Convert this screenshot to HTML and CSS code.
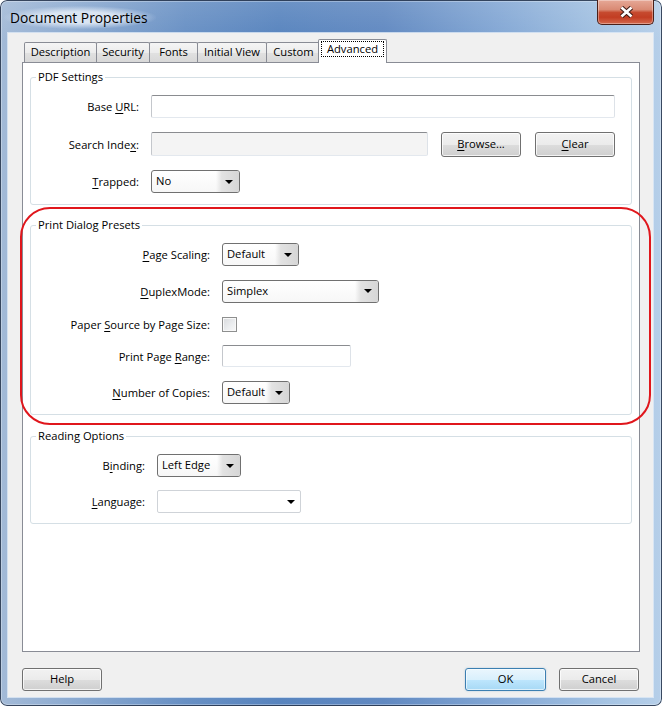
FILE: index.html
```html
<!DOCTYPE html>
<html>
<head>
<meta charset="utf-8">
<title>Document Properties</title>
<link rel="stylesheet" href="styles.css">
</head>
<body>
<div class="window">
  <div class="titlebar">
    <div class="title">Document Properties</div>
    <div class="close">
      <svg class="close-x" width="15" height="12" viewBox="0 0 15 12">
        <path d="M2.5 1.5 L12.5 10.5 M12.5 1.5 L2.5 10.5" stroke="#3a1812" stroke-width="4.6" fill="none"/>
        <path d="M2.5 1.5 L12.5 10.5 M12.5 1.5 L2.5 10.5" stroke="#ffffff" stroke-width="2.6" fill="none"/>
      </svg>
    </div>
  </div>
  <div class="client">
    <div class="tabs">
      <div class="tab t-desc">Description</div>
      <div class="tab t-sec">Security</div>
      <div class="tab t-fonts">Fonts</div>
      <div class="tab t-init">Initial View</div>
      <div class="tab t-custom">Custom</div>
      <div class="tab tab-active t-adv"><span class="focus">Advanced</span></div>
    </div>
    <div class="panel">
      <div class="group g-pdf">
        <div class="group-label">PDF Settings</div>
        <div class="row">
          <div class="lbl lbl-pdf">Base <u>U</u>RL:</div>
          <div class="textbox tb-url"></div>
        </div>
        <div class="row row-tall">
          <div class="lbl lbl-pdf">Search Inde<u>x</u>:</div>
          <div class="textbox tb-search"></div>
          <div class="btn btn-browse"><u>B</u>rowse...</div>
          <div class="btn btn-clear"><u>C</u>lear</div>
        </div>
        <div class="row">
          <div class="lbl lbl-pdf"><u>T</u>rapped:</div>
          <div class="combo cb-trapped"><span class="combo-text">No</span><span class="combo-arrow"><span class="tri"></span></span></div>
        </div>
      </div>

      <div class="group g-print">
        <div class="group-label">Print Dialog Presets</div>
        <div class="row">
          <div class="lbl lbl-print"><u>P</u>age Scaling:</div>
          <div class="combo cb-scaling"><span class="combo-text">Default</span><span class="combo-arrow"><span class="tri"></span></span></div>
        </div>
        <div class="row">
          <div class="lbl lbl-print"><u>D</u>uplexMode:</div>
          <div class="combo cb-duplex"><span class="combo-text">Simplex</span><span class="combo-arrow"><span class="tri"></span></span></div>
        </div>
        <div class="row row-check">
          <div class="lbl lbl-print">Paper <u>S</u>ource by Page Size:</div>
          <div class="checkbox"></div>
        </div>
        <div class="row row-range">
          <div class="lbl lbl-print">Print Page <u>R</u>ange:</div>
          <div class="textbox tb-range"></div>
        </div>
        <div class="row">
          <div class="lbl lbl-print"><u>N</u>umber of Copies:</div>
          <div class="combo cb-copies"><span class="combo-text">Default</span><span class="combo-arrow"><span class="tri"></span></span></div>
        </div>
      </div>

      <div class="group g-read">
        <div class="group-label">Reading Options</div>
        <div class="row">
          <div class="lbl lbl-read">B<u>i</u>nding:</div>
          <div class="combo cb-binding"><span class="combo-text">Left Edge</span><span class="combo-arrow"><span class="tri"></span></span></div>
        </div>
        <div class="row">
          <div class="lbl lbl-read"><u>L</u>anguage:</div>
          <div class="combo-flat cb-lang"><span class="combo-text"></span><span class="flat-arrow"><span class="tri"></span></span></div>
        </div>
      </div>
    </div>
    <div class="footer">
      <div class="btn btn-foot">Help</div>
      <div class="spacer"></div>
      <div class="btn btn-foot btn-default">OK</div>
      <div class="btn btn-foot btn-cancel">Cancel</div>
    </div>
  </div>
  <div class="highlight"></div>
</div>
</body>
</html>
```

FILE: styles.css
```css
html, body {
  margin: 0;
  padding: 0;
  background: #ffffff;
}

.window {
  position: relative;
  width: 662px;
  height: 706px;
  box-sizing: border-box;
  padding: 0 9px 9px 8px;
  display: flex;
  flex-direction: column;
  border-radius: 7px;
  background:
    linear-gradient(180deg, rgba(255,255,255,0.12) 0%, rgba(255,255,255,0) 40px),
    linear-gradient(90deg, #a3bad7 0%, #8aa9d0 12%, #6890c4 28%, #5884be 42%, #6189c1 58%, #84a8d5 76%, #a6c4e3 92%, #b6cfe9 100%);
  box-shadow: inset 0 0 0 1px rgba(20, 35, 60, 0.8), inset 0 0 0 2px rgba(255,255,255,0.3);
  font-family: "Open Sans", "Noto Sans", sans-serif;
  font-size: 11.2px;
  color: #000;
}

/* ---------- title bar ---------- */
.titlebar {
  height: 33px;
  display: flex;
  align-items: flex-start;
  flex-shrink: 0;
}

.title {
  margin-top: 6px;
  margin-left: -4px;
  padding: 2px 8px 2px 6px;
  font-size: 13.8px;
  line-height: 19px;
  color: #000;
  background: radial-gradient(ellipse at center, rgba(230,238,248,0.85) 35%, rgba(230,238,248,0) 72%);
}

.close {
  margin-left: auto;
  margin-right: -1px;
  width: 57px;
  height: 25px;
  box-sizing: border-box;
  border: 1px solid #4a1f18;
  border-top: none;
  border-radius: 0 0 5px 5px;
  background: linear-gradient(180deg, #e6a897 0%, #d98a74 40%, #c64a2f 52%, #c23d23 72%, #d4694e 100%);
  box-shadow: inset 0 0 0 1px rgba(255,255,255,0.35);
  display: flex;
  align-items: center;
  justify-content: center;
}

.close-x {
  display: block;
  margin-left: 2px;
}

/* ---------- client area ---------- */
.client {
  flex: 1;
  background: #f0f0f0;
  box-shadow: 0 0 0 1px rgba(225, 235, 246, 0.8);
  padding: 0 13px 0 14px;
  display: flex;
  flex-direction: column;
}

.tabs {
  height: 29px;
  display: flex;
  align-items: flex-end;
  padding-left: 2px;
  flex-shrink: 0;
}

.tab {
  height: 20px;
  box-sizing: border-box;
  border: 1px solid #898c95;
  border-bottom: none;
  border-radius: 2px 2px 0 0;
  background: linear-gradient(180deg, #f5f5f5 0%, #ececec 50%, #e1e1e1 51%, #d8d8d8 100%);
  text-align: center;
  line-height: 18px;
  white-space: nowrap;
  margin-left: -1px;
}

.t-desc { width: 73px; margin-left: 0; }
.t-sec { width: 54px; }
.t-fonts { width: 49px; }
.t-init { width: 70px; }
.t-custom { width: 55px; }

.tab-active {
  position: relative;
  z-index: 2;
  width: 69px;
  height: 24px;
  margin-left: -3px;
  margin-bottom: -1px;
  background: #ffffff;
}

.focus {
  display: block;
  box-sizing: border-box;
  height: 16px;
  margin: 1px 2px 0;
  border: 1px dotted #000;
  line-height: 13px;
}

.panel {
  width: 618px;
  height: 590px;
  box-sizing: border-box;
  border: 1px solid #898c95;
  background: #ffffff;
  padding: 14px 7px 0;
  display: flex;
  flex-direction: column;
  flex-shrink: 0;
}

/* ---------- group boxes ---------- */
.group {
  position: relative;
  box-sizing: border-box;
  border: 1px solid #d5dfe5;
  border-radius: 3px;
  padding-top: 17px;
  display: flex;
  flex-direction: column;
}

.g-pdf { height: 128px; gap: 13.5px; }
.g-print { height: 190px; gap: 13.75px; margin-top: 20px; }
.g-read { height: 88px; gap: 13px; margin-top: 21px; }

.group-label {
  position: absolute;
  top: -9px;
  left: 5px;
  padding: 0 2px;
  background: #ffffff;
  line-height: 16px;
}

.row {
  display: flex;
  align-items: center;
  height: 23px;
}

.row-tall { height: 25px; }
.row-check { height: 15px; }
.row-range { height: 22px; }

.lbl {
  flex-shrink: 0;
  box-sizing: border-box;
  text-align: right;
  padding-right: 12px;
  white-space: nowrap;
}

.lbl-pdf { width: 120px; }
.lbl-print { width: 191px; }
.lbl-read { width: 126px; }

u {
  text-decoration-thickness: 1px;
  text-underline-offset: 2px;
}

/* ---------- text boxes ---------- */
.textbox {
  height: 23px;
  box-sizing: border-box;
  border: 1px solid;
  border-color: #8a8c90 #dde2e8 #e3e8ee #c4c7cc;
  border-radius: 2px;
  background: #ffffff;
}

.tb-url { width: 464px; }
.tb-search { width: 277px; height: 24px; background: #f4f4f4; }
.tb-range { width: 129px; height: 22px; }

/* ---------- buttons ---------- */
.btn {
  box-sizing: border-box;
  height: 25px;
  width: 80px;
  border: 1px solid #707070;
  border-radius: 3px;
  background: linear-gradient(180deg, #f2f2f2 0%, #ebebeb 50%, #dddddd 51%, #cfcfcf 100%);
  box-shadow: inset 0 0 0 1px rgba(255,255,255,0.75);
  text-align: center;
  line-height: 22px;
  flex-shrink: 0;
}

.btn-browse { margin-left: 13px; }
.btn-clear { margin-left: 14px; }

.btn-foot { height: 23px; line-height: 20px; }

.btn-default {
  width: 81px;
  border-color: #3c7fb1;
  background: linear-gradient(180deg, #eaf6fd 0%, #d9f0fc 50%, #bee6fd 51%, #a7d9f5 100%);
  box-shadow: inset 0 0 0 1px rgba(255,255,255,0.6), 0 0 2px rgba(60,127,177,0.35);
}

.btn-cancel { margin-left: 13px; }

/* ---------- combo boxes ---------- */
.combo {
  display: flex;
  height: 23px;
  box-sizing: border-box;
  border: 1px solid #707070;
  border-radius: 3px;
  background: linear-gradient(180deg, #ffffff 0%, #f7f7f7 100%);
  overflow: hidden;
  flex-shrink: 0;
}

.combo-text {
  flex: 1;
  padding-left: 4px;
  line-height: 20px;
  white-space: nowrap;
}

.combo-arrow {
  width: 23px;
  display: flex;
  align-items: center;
  justify-content: center;
  padding-left: 3px;
  box-sizing: border-box;
  background: linear-gradient(90deg, rgba(226,226,226,0) 0%, #e2e2e2 25%, #d6d6d6 100%);
}

.tri {
  width: 0;
  height: 0;
  border-left: 4px solid transparent;
  border-right: 4px solid transparent;
  border-top: 4px solid #000;
}

.cb-trapped { width: 89px; }
.cb-scaling { width: 77px; }
.cb-duplex { width: 157px; }
.cb-copies { width: 68px; }
.cb-binding { width: 84px; }

.combo-flat {
  display: flex;
  height: 23px;
  box-sizing: border-box;
  border: 1px solid #cfd3d8;
  border-radius: 2px;
  background: #ffffff;
  flex-shrink: 0;
}

.flat-arrow {
  width: 19px;
  display: flex;
  align-items: center;
  justify-content: center;
}

.cb-lang { width: 144px; }

/* ---------- checkbox ---------- */
.checkbox {
  width: 15px;
  height: 15px;
  box-sizing: border-box;
  border: 1px solid #8e8f8f;
  background: linear-gradient(135deg, #d8dadd 0%, #eceef0 60%, #f8f8f8 100%);
  box-shadow: inset 0 0 0 1px #f8f8f8;
}

/* ---------- footer ---------- */
.footer {
  display: flex;
  margin-top: 16px;
  padding-right: 1px;
}

.spacer { flex: 1; }

/* ---------- annotation ---------- */
.highlight {
  position: absolute;
  left: 20px;
  top: 207px;
  width: 631px;
  height: 218px;
  box-sizing: border-box;
  border: 2px solid #e0161c;
  border-radius: 30px;
  pointer-events: none;
}
```
